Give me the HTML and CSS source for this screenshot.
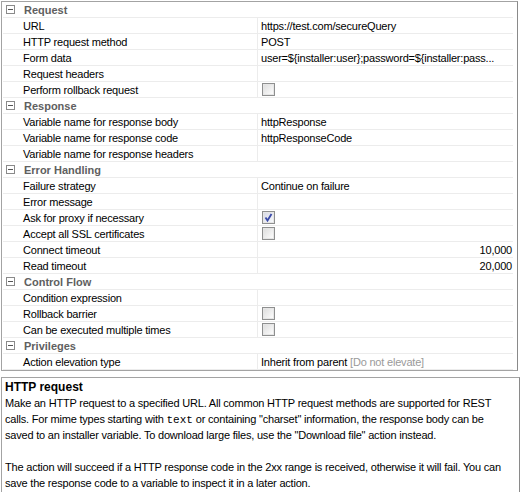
FILE: index.html
```html
<!DOCTYPE html>
<html>
<head>
<meta charset="utf-8">
<link rel="stylesheet" href="styles.css">
</head>
<body>
<div class="page">
  <div class="props">
    <div class="rows">
      <div class="cat"><span class="tog"></span><span class="cat-name">Request</span></div>
      <div class="row"><div class="k">URL</div><div class="v">https://test.com/secureQuery</div></div>
      <div class="row"><div class="k">HTTP request method</div><div class="v">POST</div></div>
      <div class="row"><div class="k">Form data</div><div class="v">user=${installer:user};password=${installer:pass...</div></div>
      <div class="row"><div class="k">Request headers</div><div class="v"></div></div>
      <div class="row"><div class="k">Perform rollback request</div><div class="v"><span class="cb"></span></div></div>

      <div class="cat"><span class="tog"></span><span class="cat-name">Response</span></div>
      <div class="row"><div class="k">Variable name for response body</div><div class="v">httpResponse</div></div>
      <div class="row"><div class="k">Variable name for response code</div><div class="v">httpResponseCode</div></div>
      <div class="row"><div class="k">Variable name for response headers</div><div class="v"></div></div>

      <div class="cat"><span class="tog"></span><span class="cat-name">Error Handling</span></div>
      <div class="row"><div class="k">Failure strategy</div><div class="v">Continue on failure</div></div>
      <div class="row"><div class="k">Error message</div><div class="v"></div></div>
      <div class="row"><div class="k">Ask for proxy if necessary</div><div class="v"><span class="cb checked"><svg viewBox="0 0 13 13" width="13" height="13"><path d="M3.5 6.5 L5.5 9.5 L9.5 3" fill="none" stroke="#3a4aa8" stroke-width="1.8"/></svg></span></div></div>
      <div class="row"><div class="k">Accept all SSL certificates</div><div class="v"><span class="cb"></span></div></div>
      <div class="row"><div class="k">Connect timeout</div><div class="v num">10,000</div></div>
      <div class="row"><div class="k">Read timeout</div><div class="v num">20,000</div></div>

      <div class="cat"><span class="tog"></span><span class="cat-name">Control Flow</span></div>
      <div class="row"><div class="k">Condition expression</div><div class="v"></div></div>
      <div class="row"><div class="k">Rollback barrier</div><div class="v"><span class="cb"></span></div></div>
      <div class="row"><div class="k">Can be executed multiple times</div><div class="v"><span class="cb"></span></div></div>

      <div class="cat"><span class="tog"></span><span class="cat-name">Privileges</span></div>
      <div class="row last"><div class="k">Action elevation type</div><div class="v">Inherit from parent <span class="dim">[Do not elevate]</span></div></div>
    </div>
  </div>
  <div class="help">
    <div class="help-title">HTTP request</div>
    <p>Make an HTTP request to a specified URL. All common HTTP request methods are supported for REST calls. For mime types starting with <code>text</code> or containing "charset" information, the response body can be saved to an installer variable. To download large files, use the "Download file" action instead.</p>
    <p>The action will succeed if a HTTP response code in the 2xx range is received, otherwise it will fail. You can save the response code to a variable to inspect it in a later action.</p>
  </div>
</div>
</body>
</html>
```

FILE: styles.css
```css
html, body {
  margin: 0;
  padding: 0;
  background: #ffffff;
}
body {
  font-family: "Liberation Sans", Arial, sans-serif;
  font-size: 11px;
  letter-spacing: -0.2px;
  color: #000;
}
.page {
  width: 521px;
  height: 492px;
  display: flex;
  flex-direction: column;
}
.props {
  margin: 1px 3px 0 1px;
  height: 375px;
  border: 1px solid #a3a3a3;
  border-right-color: #8a8a8a;
  padding: 0 4px 0 1px;
  box-sizing: border-box;
}
.rows {
  display: flex;
  flex-direction: column;
}
.cat, .row {
  height: 16px;
  box-sizing: border-box;
  border-bottom: 1px solid #ececec;
  display: flex;
  align-items: center;
}
.cat {
  padding-left: 3px;
}
.tog {
  width: 7px;
  height: 7px;
  border: 1px solid #8a8a8a;
  position: relative;
  margin-right: 9px;
  flex: none;
}
.tog::after {
  content: "";
  position: absolute;
  left: 1px;
  top: 3px;
  width: 5px;
  height: 1px;
  background: #555;
}
.cat-name {
  font-weight: bold;
  color: #606060;
  letter-spacing: 0;
}
.k {
  width: 255px;
  flex: none;
  padding-left: 20px;
  box-sizing: border-box;
  height: 100%;
  display: flex;
  align-items: center;
  border-right: 1px solid #ececec;
  white-space: nowrap;
}
.v {
  flex: 1;
  padding-left: 3px;
  height: 100%;
  display: flex;
  align-items: center;
  white-space: nowrap;
  overflow: hidden;
}
.v.num {
  justify-content: flex-end;
  padding-right: 1px;
}
.dim {
  color: #9a9a9a;
  margin-left: 3px;
}
.cb {
  width: 13px;
  height: 13px;
  box-sizing: border-box;
  border: 1px solid #8e8f8f;
  background: linear-gradient(135deg, #dcdcdc 0%, #f4f4f4 70%, #ffffff 100%);
  box-shadow: inset 0 0 0 1px #e6e6e6;
  display: block;
  margin-left: 1px;
}
.cb.checked {
  background: linear-gradient(135deg, #d6d8e4 0%, #eef0f6 70%, #ffffff 100%);
}
.cb svg {
  display: block;
  margin: -1px;
}
.help {
  margin: 6px 1px 2px 1px;
  flex: 1;
  border: 1px solid #a3a3a3;
  border-right-color: #8a8a8a;
  padding: 1px 10px 0 3px;
  line-height: 16px;
  font-size: 11px;
}
.help-title {
  font-weight: bold;
  letter-spacing: 0;
  font-size: 12px;
}
.help p {
  margin: 0 0 16px 0;
}
.help code {
  font-family: "Liberation Mono", "Courier New", monospace;
  font-size: 11px;
  line-height: 1;
  letter-spacing: 0;
}
```
